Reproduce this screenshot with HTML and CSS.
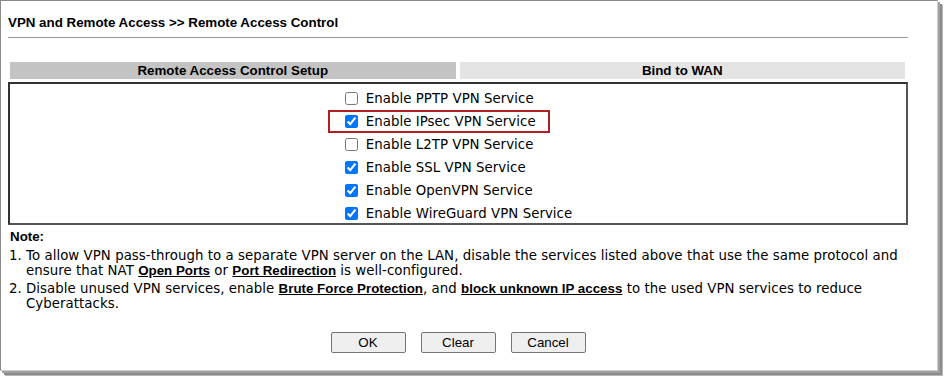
FILE: index.html
```html
<!DOCTYPE html>
<html>
<head>
<meta charset="utf-8">
<link rel="stylesheet" href="styles.css">
</head>
<body>
<div class="frame">
  <div class="title">VPN and Remote Access &gt;&gt; Remote Access Control</div>
  <div class="tabs">
    <div class="tab active">Remote Access Control Setup</div>
    <div class="tab">Bind to WAN</div>
  </div>
  <div class="panel">
    <div class="options">
      <label class="opt"><input type="checkbox"> Enable PPTP VPN Service</label>
      <label class="opt hl"><input type="checkbox" checked> Enable IPsec VPN Service</label>
      <label class="opt"><input type="checkbox"> Enable L2TP VPN Service</label>
      <label class="opt"><input type="checkbox" checked> Enable SSL VPN Service</label>
      <label class="opt"><input type="checkbox" checked> Enable OpenVPN Service</label>
      <label class="opt"><input type="checkbox" checked> Enable WireGuard VPN Service</label>
    </div>
  </div>
  <div class="note">
    <div class="note-title">Note:</div>
    <ol class="note-list">
      <li>To allow VPN pass-through to a separate VPN server on the LAN, disable the services listed above that use the same protocol and ensure that NAT <a href="#">Open Ports</a> or <a href="#">Port Redirection</a> is well-configured.</li>
      <li>Disable unused VPN services, enable <a href="#">Brute Force Protection</a>, and <a href="#">block unknown IP access</a> to the used VPN services to reduce Cyberattacks.</li>
    </ol>
  </div>
  <div class="buttons">
    <button class="btn">OK</button>
    <button class="btn">Clear</button>
    <button class="btn">Cancel</button>
  </div>
</div>
</body>
</html>
```
FILE: styles.css
```css
html, body { margin: 0; padding: 0; background: #fff; }
body { width: 944px; height: 377px; overflow: hidden; }
.frame {
  box-sizing: border-box;
  width: 938px;
  height: 371px;
  border-left: 1px solid #8a8a8a;
  border-top: 1px solid #8a8a8a;
  border-right: 1px solid #d0d0d0;
  border-bottom: 1px solid #d0d0d0;
  box-shadow: 2px 2px 0 #a0a0a0, 4px 4px 0 #8c8c8c, 5px 5px 0 #b8b8b8;
  padding: 14px 0 0 7px;
  font-family: "DejaVu Sans", Verdana, sans-serif;
  color: #000;
}
.title {
  font-family: "Liberation Sans", Arial, sans-serif;
  font-weight: bold;
  font-size: 13.33px;
  line-height: 15px;
  width: 900px;
  padding-bottom: 7px;
  border-bottom: 1px solid #999;
}
.tabs {
  display: flex;
  gap: 4px;
  margin: 24px 0 0 2px;
  width: 895px;
}
.tab {
  flex: 1;
  height: 17px;
  line-height: 17px;
  text-align: center;
  background: #e4e4e4;
  font-family: "Liberation Sans", Arial, sans-serif;
  font-weight: bold;
  font-size: 13.33px;
}
.tab.active { background: #c4c4c4; }
.panel {
  box-sizing: border-box;
  width: 900px;
  margin-top: 3px;
  height: 143px;
  border: 2px solid #333;
  border-right-color: #555;
  border-bottom-color: #555;
  display: flex;
  justify-content: center;
  padding-top: 3px;
}
.options { display: flex; flex-direction: column; }
.opt {
  position: relative;
  flex-shrink: 0;
  display: flex;
  align-items: center;
  height: 23px;
  font-size: 13.33px;
  letter-spacing: 0.05px;
}
.opt input { margin: 0 8px 0 1px; width: 13px; height: 13px; accent-color: #0075ff; flex-shrink: 0; }
.opt.hl::before {
  content: "";
  position: absolute;
  left: -16px;
  top: 0;
  width: 222px;
  height: 23px;
  box-sizing: border-box;
  border: 2px solid #b02020;
  pointer-events: none;
}
.note { margin-left: 2px; font-size: 13.33px; letter-spacing: 0.05px; }
.note-title {
  font-family: "Liberation Sans", Arial, sans-serif;
  font-weight: bold;
  font-size: 13.33px;
  margin-top: 4px;
  line-height: 15px;
  letter-spacing: 0;
}
.note-list { margin: 4px 0 0 0; padding-left: 16px; width: 890px; line-height: 15px; }
.note-list li { margin-bottom: 3px; padding-left: 0; }
.note-list a {
  color: #000;
  font-family: "Liberation Sans", Arial, sans-serif;
  font-weight: bold;
  text-decoration: underline;
  letter-spacing: 0;
}
.buttons {
  display: flex;
  justify-content: center;
  gap: 15px;
  width: 900px;
  margin-top: 21px;
}
.btn {
  width: 75px;
  height: 21px;
  padding: 0;
  font-family: "Liberation Sans", Arial, sans-serif;
  font-size: 13.33px;
  background: #efefef;
  border: 1px solid #767676;
  border-radius: 2px;
}
```
